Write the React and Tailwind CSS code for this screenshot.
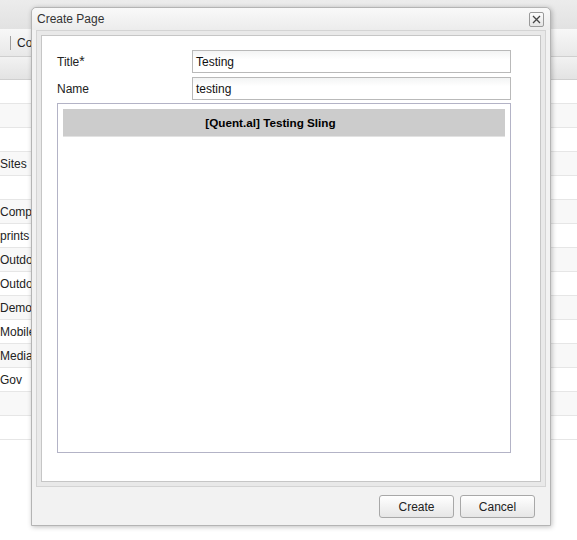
import React from 'react';

const rows = [
    { label: '', shaded: false },
    { label: '', shaded: true },
    { label: '', shaded: false },
    { label: 'Sites', shaded: true },
    { label: '', shaded: false },
    { label: 'Compo', shaded: true },
    { label: 'prints', shaded: false },
    { label: 'Outdoo', shaded: true },
    { label: 'Outdoo', shaded: false },
    { label: 'Demo S', shaded: true },
    { label: 'Mobile', shaded: false },
    { label: 'Media', shaded: true },
    { label: 'Gov', shaded: false },
    { label: '', shaded: true },
    { label: '', shaded: false },
];

const CloseButton = () => (
    <button className="w-[15px] h-[15px] rounded-[2px] border border-[#9a9a9a] bg-gradient-to-b from-[#fdfdfd] to-[#e4e4e4] flex items-center justify-center">
        <svg width="9" height="9" viewBox="0 0 9 9">
            <path d="M1 1 L8 8 M8 1 L1 8" stroke="#444" strokeWidth="1.3" fill="none" />
        </svg>
    </button>
);

const Field = ({ label, required, value }) => (
    <div className="flex items-center h-[23px]">
        <span className="w-[135px] text-[12px] text-[#222]">
            {label}
            {required && <span className="text-[14px] leading-none">*</span>}
        </span>
        <div className="w-[319px] h-[23px] border border-[#b9b9b9] bg-gradient-to-b from-[#f3f4f4] to-white to-[40%] flex items-center px-[3px] text-[12px] text-[#111]">
            {value}
        </div>
    </div>
);

const DialogButton = ({ children }) => (
    <button className="w-[75px] h-[23px] rounded-[3px] border border-[#a8a8a8] bg-gradient-to-b from-white to-[#e6e6e6] text-[12px] text-[#222]">
        {children}
    </button>
);

export default function App() {
    return (
        <div className="relative w-[577px] h-[540px] overflow-hidden bg-white font-['Liberation_Sans',Arial,sans-serif]">
            {/* page behind the dialog */}
            <div className="flex flex-col">
                <div className="h-[30px] bg-gradient-to-b from-[#ececec] to-[#e2e2e2] border-b border-[#f8f8f8]" />
                <div className="h-[27px] bg-gradient-to-b from-[#f7f7f7] to-[#e8e8e8] border-b border-[#cfcfcf] flex items-center">
                    <span className="ml-[10px] w-px h-[14px] bg-[#a0a0a0]" />
                    <span className="ml-[6px] text-[12px] text-[#222]">Co</span>
                </div>
                <div className="h-[23px] bg-gradient-to-b from-[#f2f2f2] to-[#e3e3e3] border-b border-[#cfcfcf]" />
                {rows.map((row, i) => (
                    <div
                        key={i}
                        className={`h-[24px] border-b border-[#e6e6e6] flex items-center ${row.shaded ? 'bg-[#f8f8f8]' : 'bg-white'}`}
                    >
                        <span className="text-[12px] text-[#222] whitespace-nowrap">{row.label}</span>
                    </div>
                ))}
            </div>

            {/* modal dialog */}
            <div className="absolute left-[31px] top-[7px] w-[520px] h-[519px] rounded-t-[5px] border border-[#b4b4b4] bg-[#f2f2f2] shadow-[1px_1px_5px_rgba(0,0,0,0.25)] flex flex-col">
                <div className="h-[22px] rounded-t-[5px] bg-gradient-to-b from-[#f9f9f9] to-[#ececec] flex items-center justify-between pl-[5px] pr-[6px]">
                    <span className="text-[12px] text-[#333]">Create Page</span>
                    <CloseButton />
                </div>
                <div className="mx-[4px] h-[457px] border border-[#d4d4d4] bg-[#e9e9e9] p-[4px]">
                    <div className="h-full border border-[#c6c6c6] bg-white pl-[15px] pt-[14px] flex flex-col gap-[4px]">
                        <Field label="Title" required value="Testing" />
                        <Field label="Name" value="testing" />
                        <div className="mt-[-1px] w-[454px] h-[350px] border border-[#b3b3c6] p-[5px]">
                            <div className="h-[28px] bg-[#cccccc] border-b border-[#e2e2e2] flex items-center justify-center pr-[27px] text-[11.7px] font-bold text-[#000]">
                                [Quent.al] Testing Sling
                            </div>
                        </div>
                    </div>
                </div>
                <div className="flex-1 flex justify-end items-start gap-[6px] pt-[8px] pr-[15px]">
                    <DialogButton>Create</DialogButton>
                    <DialogButton>Cancel</DialogButton>
                </div>
            </div>
        </div>
    );
}
